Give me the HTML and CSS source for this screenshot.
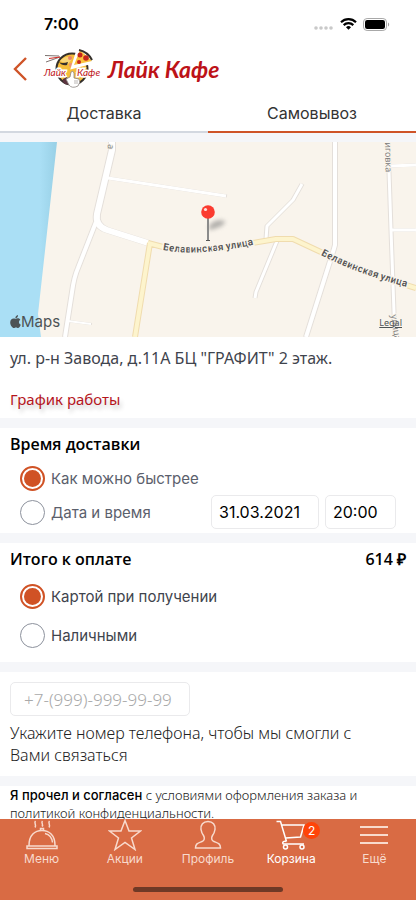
FILE: index.html
```html
<!DOCTYPE html>
<html lang="ru">

<head>
    <meta charset="UTF-8" />
    <meta name="viewport" content="width=device-width, initial-scale=1.0" />
    <title>Лайк Кафе</title>
    <link rel="stylesheet" href="styles.css">
</head>

<body>

    <div class="status-bar">
        <span class="time">7:00</span>
        <div class="status-icons">
            <svg width="20" height="12" viewBox="0 0 20 12" fill="#c9c9c9">
                <circle cx="2" cy="10" r="1.800" />
                <circle cx="7" cy="10" r="1.800" />
                <circle cx="12" cy="10" r="1.800" />
                <circle cx="17" cy="10" r="1.800" />
            </svg>
            <svg width="17" height="12" viewBox="0 0 17 12" fill="none" stroke="#000" stroke-width="2.2">
                <path d="M1 4.2a10.8 10.8 0 0 1 15 0" />
                <path d="M3.7 7.1a6.9 6.9 0 0 1 9.6 0" />
                <path d="M8.5 11.8 6 9.3a3.6 3.6 0 0 1 5 0z" fill="#000" stroke="none" />
            </svg>
            <svg width="27" height="13" viewBox="0 0 27 13">
                <rect x=".5" y=".5" width="23" height="12" rx="3.6" fill="none" stroke="#a8a8a8" />
                <rect x="2" y="2" width="20" height="9" rx="2.2" />
                <path d="M25 4.5c1.6.6 1.6 3.4 0 4z" fill="#a0a0a0" />
            </svg>
        </div>
    </div>

    <header class="header">
        <button class="back" aria-label="Назад">
            <svg width="14" height="24" viewBox="0 0 14 24" fill="none" stroke="#cf5428" stroke-width="2.4">
                <path d="M13 1 2 12l11 11" />
            </svg>
        </button>
        <svg class="logo" width="58" height="40" viewBox="0 0 58 40">
            <circle cx="29" cy="20" r="15.5" fill="#f6bd3a" stroke="#35302b" stroke-width="2" />
            <path d="M17 12c4-5 9-5 12-2l-4 5z" fill="#f9d678" />
            <path d="M2 6.500 16 7M3 13l14-5" stroke="#7d7370" stroke-width="1" />
            <path d="M6 9.500 17 8" stroke="#d42a25" stroke-width="1" />
            <path d="M16 13q3 2 9 0l-1 3q-5 1-8-3z" fill="#35302b" />
            <circle cx="27" cy="9" r="2" fill="#e9826b" />
            <circle cx="28" cy="16" r="2" fill="#ee9276" />
            <path d="M36 1 50 12 31 17z" fill="#fbc33f" stroke="#fff" stroke-width="5" />
            <path d="M37 1 49 12 31 16z" fill="#fbc33f" />
            <path d="M36 1q9 2 13 10" fill="none" stroke="#35302b" stroke-width="2" />
            <circle cx="37" cy="6" r="2.500" fill="#c5261c" />
            <circle cx="43" cy="9" r="2.800" fill="#c5261c" />
            <circle cx="36" cy="13" r="2" fill="#c5261c" />
            <text class="logo-text" x="1" y="27">Лайк</text>
            <text class="logo-text" x="34" y="27">Кафе</text>
            <path d="M20 30l4-2 4 8-6-1q-3-2-2-5z" fill="#5b3440" />
            <path d="M23 30l4-2 1-5q2-2 3 1v5l5 1q2 3-1 7-6 3-9-1z" fill="#fff" stroke="#8b8582" stroke-width=".8" />
            <path d="M31 32h4m-4 2h4" stroke="#8b8582" stroke-width=".6" />
        </svg>
        <span class="brand">Лайк Кафе</span>
    </header>

    <nav class="tabs">
        <a class="tab" href="#delivery">Доставка</a>
        <a class="tab active" href="#pickup">Самовывоз</a>
    </nav>

    <main>
        <section class="map" aria-label="Карта">
            <svg class="map-canvas" viewBox="0 0 416 195" preserveAspectRatio="xMidYMid slice">
                <defs>
                    <linearGradient id="shore" x1="0" x2="1">
                        <stop offset=".7" stop-color="#aadff5" />
                        <stop offset="1" stop-color="#98d0e6" />
                    </linearGradient>
                    <filter id="blur" x="-50%" y="-50%" width="200%" height="200%">
                        <feGaussianBlur stdDeviation="2" />
                    </filter>
                    <path id="street1" d="M163 108q40 8 110-10" />
                    <path id="street2" d="M321 113Q360 134 430 151" />
                    <g id="lanes">
                        <path d="M108 36 226 54" stroke-width="3" />
                        <path d="M96 80 78 126q-4 9-6 24l-7 45" stroke-width="4" />
                        <path d="M68 179 91 182" stroke-width="2" />
                        <path d="m302 42-9 16-26 26-1 13" stroke-width="3" />
                        <path d="M277 99 256 150l-1 6" stroke-width="3" />
                        <path d="M335 0v103q-1 4-3 10l-26 82" stroke-width="4" />
                        <path d="M388 0 391 88l3 82 1 25M390 24l26-1M391 88h25" stroke-width="3" />
                        <path d="M112 0v8L97 72q-2 12 10 16l41 13" stroke-width="6" />
                    </g>
                </defs>
                <rect width="416" height="195" fill="#f9f4ec" />
                <path d="M0 0h57L38 172l3 23H0z" fill="url(#shore)" />
                <g fill="none" stroke-linejoin="round">
                    <use href="#lanes" stroke="#e4dfda" transform="translate(1 0)" />
                    <use href="#lanes" stroke="#e4dfda" transform="translate(-1 0)" />
                    <use href="#lanes" stroke="#fff" />
                    <path d="M150 101 135 195M148 101l15 4q40 6 90-4l23-4h17l30 14q38 19 93 35" stroke="#f0dcae" stroke-width="6" />
                    <path d="M150 101 135 195M148 101l15 4q40 6 90-4l23-4h17l30 14q38 19 93 35" stroke="#fdf4cd" stroke-width="4" />
                </g>
                <g class="street">
                    <text><textPath href="#street1">Белавинская улица</textPath></text>
                    <text><textPath href="#street2">Белавинская улица</textPath></text>
                </g>
                <g class="street-small">
                    <text transform="translate(385 -6) rotate(89)">Лиговка</text>
                    <text transform="translate(391 173) rotate(82)">улица</text>
                    <text transform="translate(108 2) rotate(96)">а</text>
                </g>
                <path d="M209 84q6-8 16-5 0 6-16 9z" fill="#777" opacity=".55" filter="url(#blur)" />
                <path d="M208 76v22" stroke="#8b8b8b" stroke-width="2" />
                <path d="M206 98.500h4" stroke="#555" />
                <circle cx="208" cy="70" r="6.800" fill="#fb3b30" />
                <circle cx="205.500" cy="67.500" r="1.600" fill="#fff" opacity=".85" />
            </svg>
            <div class="map-footer">
                <span class="map-brand">
                    <svg width="11" height="14" viewBox="0 0 11 14" fill="#4d5355">
                        <path d="M5.500 4C7 3 9.200 3 10.300 4.800c-2 1.300-1.700 4 .5 5-.7 2-2 3.700-3.300 3.200-1.300-.6-2-.5-3 0C2.800 13.700.2 10.500.2 7.500.200 4.300 3 2.700 5.500 4zM5.400 3.500C5.200 1.800 6.300.4 8 0c.2 1.700-1 3.300-2.600 3.500z" />
                    </svg>
                    Maps
                </span>
                <a class="legal" href="#legal">Legal</a>
            </div>
        </section>

        <section class="block address">
            <p>ул. р-н Завода, д.11А БЦ "ГРАФИТ" 2 этаж.</p>
            <a class="schedule" href="#schedule">График работы</a>
        </section>

        <section class="block time-block">
            <h2>Время доставки</h2>
            <label class="option muted">
                <input type="radio" name="when" checked>
                Как можно быстрее
            </label>
            <div class="option-row">
                <label class="option muted">
                    <input type="radio" name="when">
                    Дата и время
                </label>
                <input class="field date" type="text" value="31.03.2021" aria-label="Дата">
                <input class="field hour" type="text" value="20:00" aria-label="Время">
            </div>
        </section>

        <section class="block pay-block">
            <div class="total">
                <h2>Итого к оплате</h2>
                <span>614 ₽</span>
            </div>
            <label class="option">
                <input type="radio" name="pay" checked>
                Картой при получении
            </label>
            <label class="option">
                <input type="radio" name="pay">
                Наличными
            </label>
        </section>

        <section class="block phone-block">
            <input class="field phone" id="phone" type="tel" placeholder="+7-(999)-999-99-99">
            <label class="hint" for="phone">Укажите номер телефона, чтобы мы смогли с Вами связаться</label>
        </section>

        <section class="block agreement">
            <p><b>Я прочел и согласен</b> с условиями оформления заказа и политикой конфиденциальности.</p>
        </section>
    </main>

    <nav class="tab-bar">
        <div class="tab-items">
            <a href="#menu">
                <svg width="32" height="30" viewBox="0 0 32 30">
                    <path d="M1 26h30v2.500H1zM3 25.500C3 15 9 10.500 16 10.500s13 4.500 13 15M14.500 10.500v-2h3v2M19 13.500c4 1 7 4 7.500 9" />
                    <path d="M9.500 1c-2 2 1.500 4-.5 6.500M16.500 1c-2 2 1.500 3.500-.5 5.500M23.500 1c-2 2 1.500 4-.5 6.500" />
                </svg>
                <span>Меню</span>
            </a>
            <a href="#sales">
                <svg width="34" height="32" viewBox="0 0 34 32">
                    <path d="m17 1.500 4 10.500h11.500l-9 7 3.500 11.500-10-7-10 7L10.500 19l-9-7H13z" />
                </svg>
                <span>Акции</span>
            </a>
            <a href="#profile">
                <svg width="28" height="30" viewBox="0 0 28 30">
                    <path d="M14 1.500c-5 0-7.500 3.500-7 8 .5 3 1 4 2.500 6 1.500 2.500 1 5-1.500 6-4 1.500-6.500 2-6.500 6.500h25c0-4.500-2.500-5-6.500-6.500-2.500-1-3-3.500-1.500-6 1.500-2 2-3 2.500-6 .5-4.500-2-8-7-8z" />
                </svg>
                <span>Профиль</span>
            </a>
            <a class="current" href="#cart">
                <span class="cart">
                    <svg width="30" height="30" viewBox="0 0 30 30">
                        <path d="M.5 1.500h4l6 20M6 5h22l-3.500 12L9.500 18M10.500 21.500C6 20.500 6 24 8 24h20" />
                        <circle cx="9.500" cy="27" r="2" />
                        <circle cx="26" cy="27" r="2" />
                    </svg>
                    <span class="badge">2</span>
                </span>
                <span>Корзина</span>
            </a>
            <a href="#more">
                <svg width="28" height="30" viewBox="0 0 28 30">
                    <path d="M0 7h28M0 15h28M0 23h28" stroke-width="2" />
                </svg>
                <span>Ещё</span>
            </a>
        </div>
        <div class="home-line"></div>
    </nav>

</body>

</html>
```

FILE: styles.css
```css
* {
    box-sizing: border-box;
}

body {
    margin: 0;
    padding-bottom: 72px;
    background: #fff;
    color: #3f444d;
    font-family: "Noto Sans", "Open Sans", sans-serif;
}

a {
    color: inherit;
    text-decoration: none;
}

h2,
p {
    margin: 0;
}

svg {
    display: block;
}

/* Status bar and header */
.status-bar {
    display: flex;
    align-items: center;
    justify-content: space-between;
    height: 48px;
    padding: 0 26px 0 44px;
}

.time {
    font: 600 16px Inter, sans-serif;
    color: #000;
}

.status-icons {
    display: flex;
    align-items: center;
    gap: 6px;
}

.header {
    display: flex;
    align-items: center;
    height: 42px;
    padding: 0 13px;
}

.back {
    margin-right: 16px;
    padding: 0;
    border: none;
    background: none;
    cursor: pointer;
}

.logo-text {
    font: italic 10px Lato, sans-serif;
    fill: #c0181c;
    stroke: #fff;
    stroke-width: 3px;
    paint-order: stroke;
}

.brand {
    margin-left: 7px;
    font: italic bold 23px Lato, sans-serif;
    color: #bd1318;
}

/* Delivery tabs */
.tabs {
    display: flex;
}

.tab {
    flex: 1;
    height: 43px;
    border-bottom: 2px solid #d3d8e0;
    font: 16px/46px Inter, sans-serif;
    color: #333;
    text-align: center;
}

.tab.active {
    border-color: #cf5428;
}

/* Map */
.map {
    position: relative;
    border-top: 9px solid #f5f6f9;
}

.map-canvas {
    width: 100%;
    height: 195px;
}

.street {
    font: 600 10px Roboto, sans-serif;
    fill: #555;
    stroke: #f9f4ec;
    stroke-width: 3px;
    paint-order: stroke;
}

.street-small {
    font: 9px "Open Sans", sans-serif;
    fill: #777;
    stroke: #f9f4ec;
    stroke-width: 2px;
    paint-order: stroke;
}

.map-footer {
    position: absolute;
    right: 0;
    bottom: 6px;
    left: 0;
    display: flex;
    align-items: center;
    justify-content: space-between;
    padding: 0 14px 0 10px;
    color: #4d5355;
}

.map-brand {
    display: flex;
    align-items: center;
    font: 15px/18px Inter, sans-serif;
}

.legal {
    font-size: 9px;
    text-decoration: underline;
}

/* Content blocks */
.block {
    padding: 0 10px;
    border-bottom: 10px solid #f5f6f9;
}

.block h2,
.total {
    font-family: "Open Sans", sans-serif;
    font-size: 16px;
    font-weight: 600;
    line-height: 22px;
    color: #000;
}

.address {
    padding-top: 10px;
    padding-bottom: 8px;
    font-size: 16px;
    line-height: 22px;
}

.schedule {
    display: inline-block;
    margin-top: 20px;
    font-size: 15px;
    line-height: 21px;
    color: #b5151d;
    text-shadow: 2px 4px 4px rgba(0, 0, 0, 0.2);
}

.time-block {
    padding-top: 5px;
    padding-bottom: 4px;
}

.option {
    display: flex;
    align-items: center;
    gap: 6px;
    height: 39px;
    padding-left: 10px;
    font: 15px Inter, sans-serif;
}

.muted {
    height: 34px;
    color: #5b606c;
}

.time-block h2 {
    margin-bottom: 6px;
}

.option input {
    appearance: none;
    width: 25px;
    height: 25px;
    margin: 0;
    border: 1px solid #8d929d;
    border-radius: 50%;
}

.option input:checked {
    padding: 2px;
    border: 2px solid #d05225;
    background: #d05225 content-box;
}

.option-row {
    display: flex;
    align-items: center;
    gap: 6px;
    padding-right: 10px;
}

.option-row .option {
    flex: 1;
}

.field {
    height: 34px;
    border: 1px solid #eaeaec;
    border-radius: 5px;
    background: #fff;
    font: 16px Inter, sans-serif;
    color: #000;
}

.date {
    width: 108px;
    padding: 0 7px;
}

.hour {
    width: 71px;
    padding: 0 7px;
}

.pay-block {
    padding-top: 5px;
    padding-bottom: 7px;
}

.total {
    display: flex;
    justify-content: space-between;
    margin-bottom: 7px;
}

.phone-block {
    padding-top: 10px;
    padding-bottom: 10px;
}

.phone {
    display: block;
    width: 180px;
    padding: 0 13px;
    font: 300 17px "Noto Sans", "Open Sans", sans-serif;
}

.phone::placeholder {
    color: #a9a9a9;
}

.hint {
    display: block;
    margin-top: 6px;
    padding-right: 30px;
    font-size: 16px;
    font-weight: 300;
    line-height: 22px;
    color: #222;
}

.agreement {
    border-bottom: none;
    font-size: 13px;
    font-weight: 300;
    line-height: 18px;
    color: #222;
}

.agreement b {
    font-family: Inter, sans-serif;
    font-weight: 500;
    color: #000;
}

/* Bottom navigation */
.tab-bar {
    position: fixed;
    right: 0;
    bottom: 0;
    left: 0;
    height: 81px;
    background: #d96b44;
    color: #f8dacd;
}

.tab-items {
    display: flex;
}

.tab-items a {
    display: flex;
    flex: 1;
    flex-direction: column;
    align-items: center;
    font: 12px/16px Inter, sans-serif;
}

.tab-items svg {
    height: 32px;
    fill: none;
    stroke: currentColor;
    stroke-width: 1.5;
}

.tab-items .current {
    color: #fff;
}

.cart {
    position: relative;
}

.badge {
    position: absolute;
    top: 3px;
    right: -14px;
    width: 17px;
    height: 17px;
    border-radius: 50%;
    background: #ff4409;
    line-height: 17px;
    text-align: center;
}

.home-line {
    width: 36%;
    height: 5px;
    margin: 20px auto 0;
    border-radius: 3px;
    background: #6f3926;
}
```
